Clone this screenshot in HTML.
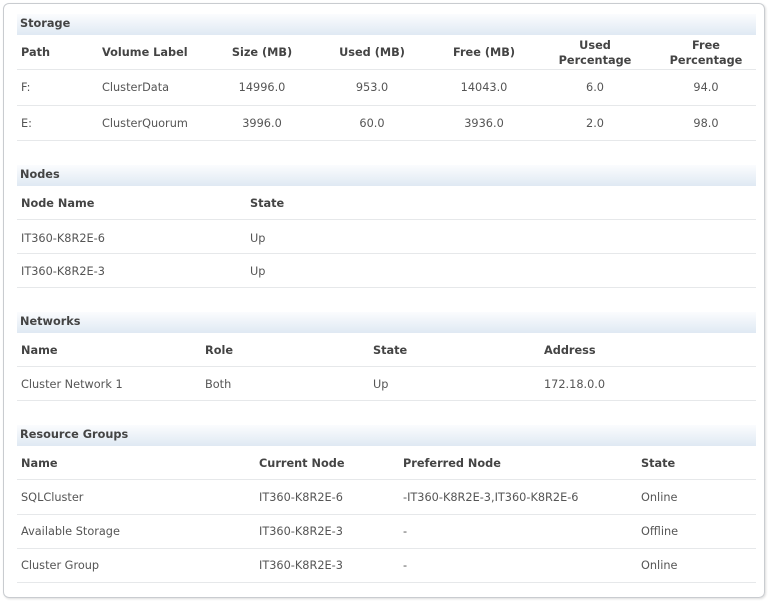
<!DOCTYPE html>
<html><head><style>
body{margin:0;width:769px;height:604px;background:#fff;font-family:"DejaVu Sans","Liberation Sans",sans-serif;font-size:11.3px;color:#555;position:relative;overflow:hidden}
.box{position:absolute;left:3px;top:3px;width:760px;height:593px;border:1px solid #c9ccd0;border-radius:6px;box-shadow:1px 1px 2px #ddd}
.bar{position:absolute;left:17px;width:739px;height:21px;background:linear-gradient(#fbfcfe,#dfe9f3);}
.bar span{position:absolute;left:3px;top:3px;font-weight:bold;color:#444}
.t{position:absolute;white-space:nowrap;line-height:13px}
.h{font-weight:bold;color:#444}
.c{transform:translateX(-50%);text-align:center}
.ln{position:absolute;left:17px;width:739px;height:1px;background:#e6e8ea}
</style></head><body>
<div class="box"></div>

<div class="bar" style="top:14px"><span>Storage</span></div>
<div class="t h" style="left:21px;top:46px">Path</div>
<div class="t h" style="left:102px;top:46px">Volume Label</div>
<div class="t h c" style="left:262px;top:46px">Size (MB)</div>
<div class="t h c" style="left:372px;top:46px">Used (MB)</div>
<div class="t h c" style="left:484px;top:46px">Free (MB)</div>
<div class="t h c" style="left:595px;top:38px;line-height:15px">Used<br>Percentage</div>
<div class="t h c" style="left:706px;top:38px;line-height:15px">Free<br>Percentage</div>
<div class="ln" style="top:69px"></div>
<div class="t" style="left:21px;top:81px">F:</div>
<div class="t" style="left:102px;top:81px">ClusterData</div>
<div class="t c" style="left:262px;top:81px">14996.0</div>
<div class="t c" style="left:372px;top:81px">953.0</div>
<div class="t c" style="left:484px;top:81px">14043.0</div>
<div class="t c" style="left:595px;top:81px">6.0</div>
<div class="t c" style="left:706px;top:81px">94.0</div>
<div class="ln" style="top:105px"></div>
<div class="t" style="left:21px;top:117px">E:</div>
<div class="t" style="left:102px;top:117px">ClusterQuorum</div>
<div class="t c" style="left:262px;top:117px">3996.0</div>
<div class="t c" style="left:372px;top:117px">60.0</div>
<div class="t c" style="left:484px;top:117px">3936.0</div>
<div class="t c" style="left:595px;top:117px">2.0</div>
<div class="t c" style="left:706px;top:117px">98.0</div>
<div class="ln" style="top:140px"></div>

<div class="bar" style="top:165px"><span>Nodes</span></div>
<div class="t h" style="left:21px;top:197px">Node Name</div>
<div class="t h" style="left:250px;top:197px">State</div>
<div class="ln" style="top:219px"></div>
<div class="t" style="left:21px;top:232px">IT360-K8R2E-6</div>
<div class="t" style="left:250px;top:232px">Up</div>
<div class="ln" style="top:253px"></div>
<div class="t" style="left:21px;top:265px">IT360-K8R2E-3</div>
<div class="t" style="left:250px;top:265px">Up</div>
<div class="ln" style="top:287px"></div>

<div class="bar" style="top:312px"><span>Networks</span></div>
<div class="t h" style="left:21px;top:344px">Name</div>
<div class="t h" style="left:205px;top:344px">Role</div>
<div class="t h" style="left:373px;top:344px">State</div>
<div class="t h" style="left:544px;top:344px">Address</div>
<div class="ln" style="top:366px"></div>
<div class="t" style="left:21px;top:378px">Cluster Network 1</div>
<div class="t" style="left:205px;top:378px">Both</div>
<div class="t" style="left:373px;top:378px">Up</div>
<div class="t" style="left:544px;top:378px">172.18.0.0</div>
<div class="ln" style="top:400px"></div>

<div class="bar" style="top:425px"><span>Resource Groups</span></div>
<div class="t h" style="left:21px;top:457px">Name</div>
<div class="t h" style="left:259px;top:457px">Current Node</div>
<div class="t h" style="left:403px;top:457px">Preferred Node</div>
<div class="t h" style="left:641px;top:457px">State</div>
<div class="ln" style="top:479px"></div>
<div class="t" style="left:21px;top:491px">SQLCluster</div>
<div class="t" style="left:259px;top:491px">IT360-K8R2E-6</div>
<div class="t" style="left:403px;top:491px">-IT360-K8R2E-3,IT360-K8R2E-6</div>
<div class="t" style="left:641px;top:491px">Online</div>
<div class="ln" style="top:514px"></div>
<div class="t" style="left:21px;top:525px">Available Storage</div>
<div class="t" style="left:259px;top:525px">IT360-K8R2E-3</div>
<div class="t" style="left:403px;top:525px">-</div>
<div class="t" style="left:641px;top:525px">Offline</div>
<div class="ln" style="top:548px"></div>
<div class="t" style="left:21px;top:559px">Cluster Group</div>
<div class="t" style="left:259px;top:559px">IT360-K8R2E-3</div>
<div class="t" style="left:403px;top:559px">-</div>
<div class="t" style="left:641px;top:559px">Online</div>
<div class="ln" style="top:582px"></div>
</body></html>
